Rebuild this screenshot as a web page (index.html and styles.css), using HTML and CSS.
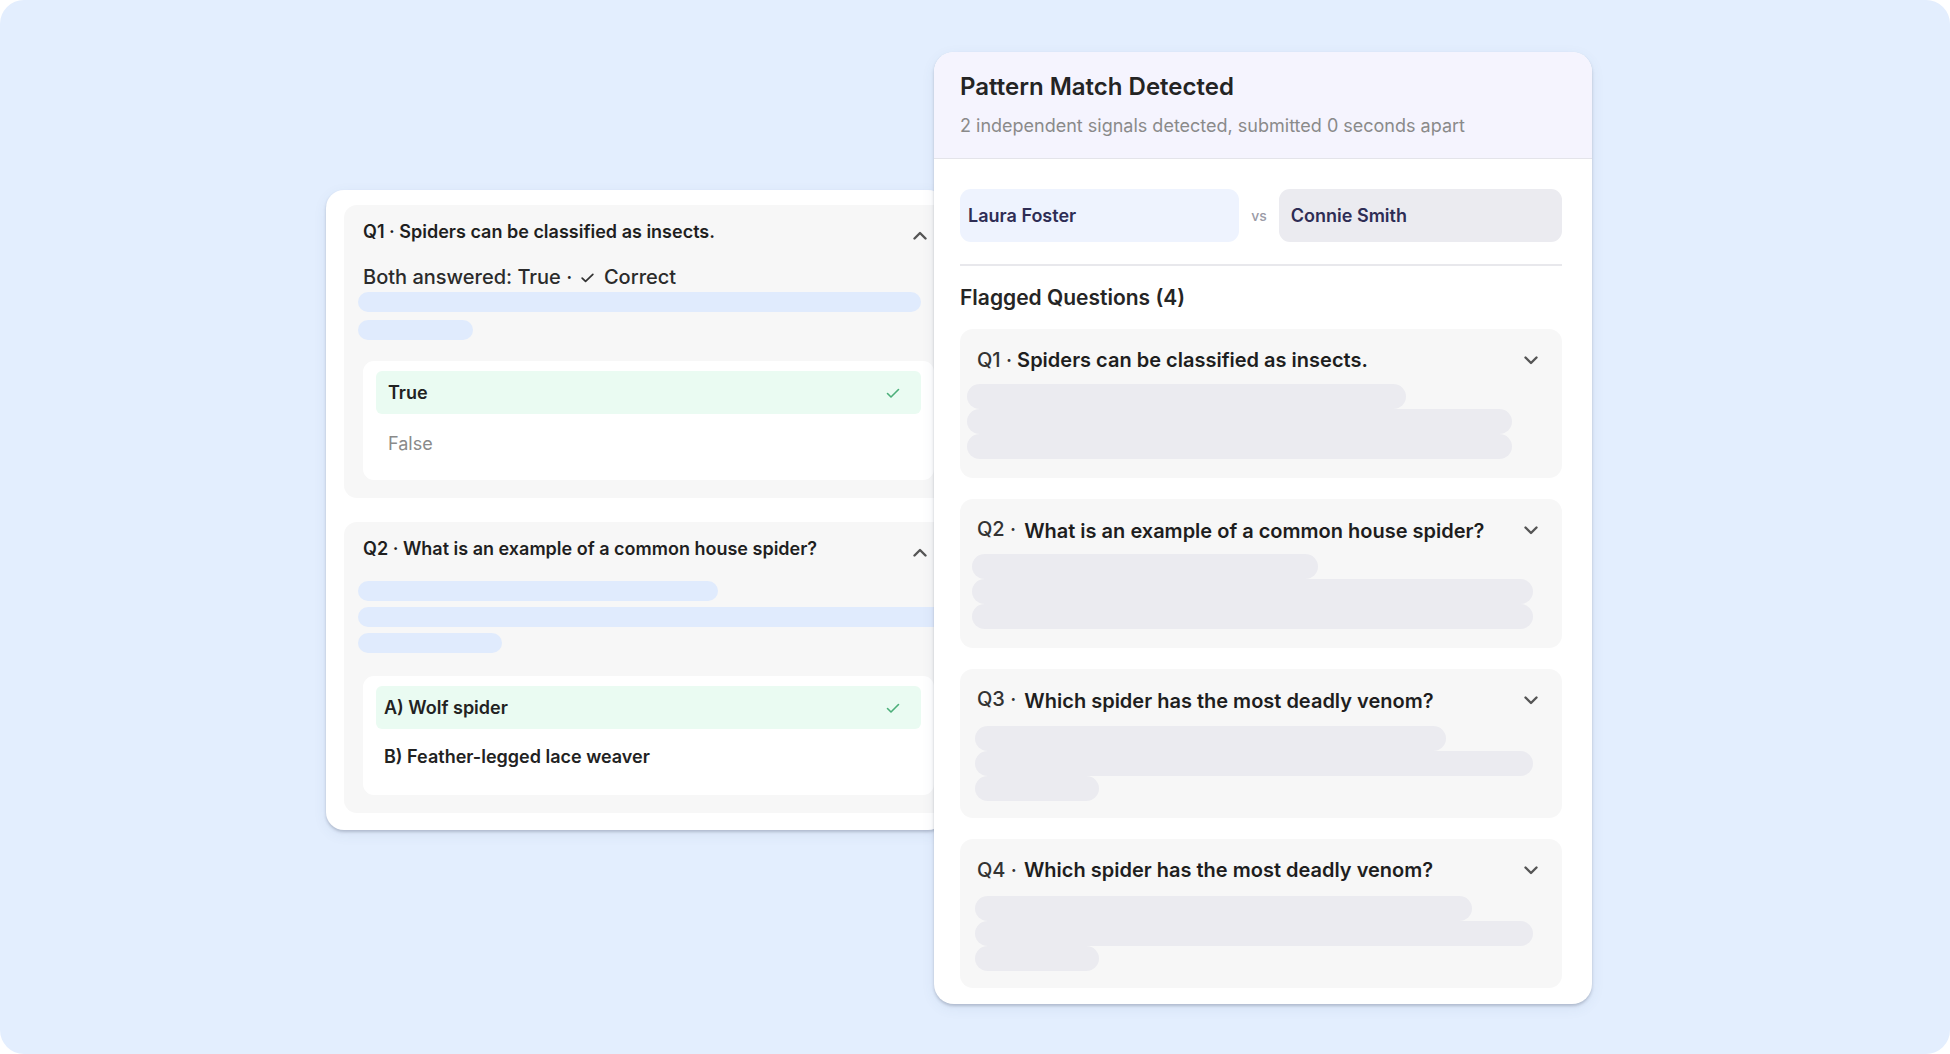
FILE: index.html
```html
<!DOCTYPE html>
<html lang="en">
<head>
    <meta charset="UTF-8">
    <meta name="viewport" content="width=device-width, initial-scale=1.0">
    <title>Pattern Match Detected</title>
    <link rel="stylesheet" href="styles.css">
</head>
<body>
    <div class="page">
        <div class="stage">
            <section class="card answers-card">
                <div class="answer-block">
                    <div class="block-head">
                        <span class="block-title">Q1 · Spiders can be classified as insects.</span>
                        <svg class="chevron up" viewBox="0 0 14 9"><path d="M1.5 7.5 7 2l5.5 5.5"/></svg>
                    </div>
                    <div class="verdict">Both answered: True · <svg class="tick" viewBox="0 0 14 14"><path d="M2 7.5l3.2 3.2L12 4"/></svg> Correct</div>
                    <div class="bars blue q1-left">
                        <span class="bar" style="width: 563px"></span>
                        <span class="bar" style="width: 115px"></span>
                    </div>
                    <ul class="options">
                        <li class="option selected"><span>True</span><svg class="check" viewBox="0 0 16 16"><path d="M2.5 8.5l3.5 3.5 7.5-7.5"/></svg></li>
                        <li class="option muted"><span>False</span></li>
                    </ul>
                </div>

                <div class="answer-block">
                    <div class="block-head">
                        <span class="block-title">Q2 · What is an example of a common house spider?</span>
                        <svg class="chevron up" viewBox="0 0 14 9"><path d="M1.5 7.5 7 2l5.5 5.5"/></svg>
                    </div>
                    <div class="bars blue q2-left">
                        <span class="bar" style="width: 360px"></span>
                        <span class="bar" style="width: 640px"></span>
                        <span class="bar" style="width: 144px"></span>
                    </div>
                    <ul class="options tight">
                        <li class="option selected"><span>A) Wolf spider</span><svg class="check" viewBox="0 0 16 16"><path d="M2.5 8.5l3.5 3.5 7.5-7.5"/></svg></li>
                        <li class="option"><span>B) Feather-legged lace weaver</span></li>
                    </ul>
                </div>
            </section>

            <section class="card match-card">
                <header class="match-header">
                    <h1>Pattern Match Detected</h1>
                    <p>2 independent signals detected, submitted 0 seconds apart</p>
                </header>

                <div class="match-body">
                    <div class="names">
                        <div class="name first">Laura Foster</div>
                        <span class="vs">vs</span>
                        <div class="name second">Connie Smith</div>
                    </div>
                    <hr class="divider">

                    <h2 class="flag-title">Flagged Questions (4)</h2>

                    <div class="flag-list">
                        <div class="flag-card">
                            <div class="flag-head">
                                <span class="flag-title-text"><span class="q-num">Q1 ·</span> Spiders can be classified as insects.</span>
                                <svg class="chevron" viewBox="0 0 14 9"><path d="M1.5 1.5 7 7l5.5-5.5"/></svg>
                            </div>
                            <div class="bars grey inset-a">
                                <span class="bar" style="width: 439px"></span>
                                <span class="bar" style="width: 545px"></span>
                                <span class="bar" style="width: 545px"></span>
                            </div>
                        </div>

                        <div class="flag-card">
                            <div class="flag-head">
                                <span class="flag-title-text"><span class="q-num raised">Q2 ·</span> What is an example of a common house spider?</span>
                                <svg class="chevron" viewBox="0 0 14 9"><path d="M1.5 1.5 7 7l5.5-5.5"/></svg>
                            </div>
                            <div class="bars grey inset-b">
                                <span class="bar" style="width: 346px"></span>
                                <span class="bar" style="width: 561px"></span>
                                <span class="bar" style="width: 561px"></span>
                            </div>
                        </div>

                        <div class="flag-card">
                            <div class="flag-head">
                                <span class="flag-title-text"><span class="q-num raised">Q3 ·</span> Which spider has the most deadly venom?</span>
                                <svg class="chevron" viewBox="0 0 14 9"><path d="M1.5 1.5 7 7l5.5-5.5"/></svg>
                            </div>
                            <div class="bars grey inset-c">
                                <span class="bar" style="width: 471px"></span>
                                <span class="bar" style="width: 558px"></span>
                                <span class="bar" style="width: 124px"></span>
                            </div>
                        </div>

                        <div class="flag-card">
                            <div class="flag-head">
                                <span class="flag-title-text"><span class="q-num spaced">Q4 ·</span> Which spider has the most deadly venom?</span>
                                <svg class="chevron" viewBox="0 0 14 9"><path d="M1.5 1.5 7 7l5.5-5.5"/></svg>
                            </div>
                            <div class="bars grey inset-c">
                                <span class="bar" style="width: 497px"></span>
                                <span class="bar" style="width: 558px"></span>
                                <span class="bar" style="width: 124px"></span>
                            </div>
                        </div>
                    </div>
                </div>
            </section>
        </div>
    </div>
</body>
</html>
```

FILE: styles.css
```css
:root {
    --page-bg: #e3eefe;
    --card-bg: #ffffff;
    --block-bg: #f7f7f7;
    --header-bg: #f5f4fe;
    --text: #1f1f1f;
    --muted: #8a8a8a;
    --navy: #2e2d55;
    --green: #4caf7a;
    --green-bg: #eafbf2;
    --blue-bar: #e0ebfd;
    --grey-bar: #ebebf0;
    --shadow: 0 2px 3px rgba(70, 80, 100, 0.28), 0 4px 14px rgba(70, 90, 130, 0.08);
}

* {
    box-sizing: border-box;
}

body {
    margin: 0;
    background: #ffffff;
    font-family: 'Inter', 'Noto Sans', sans-serif;
    color: var(--text);
}

.page {
    height: 1054px;
    background: var(--page-bg);
    border-radius: 24px;
    overflow: hidden;
}

.stage {
    display: flex;
    align-items: flex-start;
    padding: 52px 0 0 326px;
}

.card {
    background: var(--card-bg);
    box-shadow: var(--shadow);
}

/* left card: answers */
.answers-card {
    width: 620px;
    margin-top: 138px;
    padding: 15px 0 17px 18px;
    border-radius: 18px;
    display: flex;
    flex-direction: column;
    gap: 24px;
}

.answer-block {
    background: var(--block-bg);
    border-radius: 13px 0 0 13px;
    padding: 16px 12px 18px 19px;
}

.block-head {
    display: flex;
    justify-content: space-between;
    align-items: center;
    height: 22px;
}

.block-title {
    font-size: 18px;
    font-weight: 600;
    line-height: 22px;
}

.chevron {
    width: 14px;
    height: 9px;
    fill: none;
    stroke: #555;
    stroke-width: 2.4;
    stroke-linecap: round;
    stroke-linejoin: round;
}

.chevron.up {
    margin-right: 7px;
    margin-top: 7px;
}

.verdict {
    margin-top: 21px;
    font-size: 20px;
    font-weight: 500;
    line-height: 26px;
    color: #2b2b2b;
    display: flex;
    align-items: center;
    white-space: pre;
}

.tick {
    width: 15px;
    height: 15px;
    margin: 0 4px 0 2px;
    fill: none;
    stroke: #333;
    stroke-width: 1.6;
    stroke-linecap: round;
    stroke-linejoin: round;
}

.bars {
    display: flex;
    flex-direction: column;
    align-items: flex-start;
}

.bar {
    display: block;
    border-radius: 14px;
}

.bars.blue .bar {
    background: var(--blue-bar);
    height: 20px;
}

.q1-left {
    margin: 2px 0 0 -5px;
    gap: 8px;
}

.q2-left {
    margin: 21px 0 0 -5px;
    gap: 6px;
}

.options {
    list-style: none;
    margin: 21px 0 0;
    padding: 10px 13px 15px;
    background: #ffffff;
    border-radius: 11px;
    display: flex;
    flex-direction: column;
    gap: 8px;
}

.options.tight {
    margin-top: 23px;
    gap: 6px;
    padding-bottom: 17px;
}

.option {
    height: 43px;
    padding: 0 20px 0 8px;
    border-radius: 6px;
    display: flex;
    align-items: center;
    justify-content: space-between;
    font-size: 18px;
    font-weight: 600;
    color: #222;
}

.option.selected {
    background: var(--green-bg);
}

.answer-block:first-child .option {
    padding-left: 12px;
}

.option.muted {
    font-weight: 400;
    color: var(--muted);
}

.check {
    width: 16px;
    height: 16px;
    fill: none;
    stroke: var(--green);
    stroke-width: 1.6;
    stroke-linecap: round;
    stroke-linejoin: round;
}

/* right card: match */
.match-card {
    position: relative;
    z-index: 1;
    width: 658px;
    margin-left: -12px;
    border-radius: 20px;
    overflow: hidden;
}

.match-header {
    background: var(--header-bg);
    border-bottom: 1px solid #e4e4ea;
    padding: 20px 26px 20px;
}

.match-header h1 {
    margin: 0;
    font-size: 24px;
    font-weight: 600;
    line-height: 30px;
    color: #242424;
}

.match-header p {
    margin: 12px 0 0;
    font-size: 18px;
    line-height: 24px;
    color: var(--muted);
}

.match-body {
    padding: 30px 30px 16px 26px;
}

.names {
    display: flex;
    align-items: center;
    gap: 12px;
}

.name {
    flex: 1;
    height: 53px;
    border-radius: 11px;
    display: flex;
    align-items: center;
    font-size: 18px;
    font-weight: 600;
    color: var(--navy);
}

.name.first {
    background: #eef3fe;
    padding-left: 8px;
}

.name.second {
    background: #ebebf0;
    padding-left: 12px;
}

.vs {
    font-size: 14px;
    font-weight: 500;
    color: #9a9aa6;
}

.divider {
    margin: 22px 0 0;
    border: none;
    height: 2px;
    background: #e8e8ec;
}

.flag-title {
    margin: 19px 0 0;
    font-size: 21px;
    font-weight: 600;
    line-height: 26px;
    color: #252525;
}

.flag-list {
    margin-top: 18px;
    display: flex;
    flex-direction: column;
    gap: 21px;
}

.flag-card {
    height: 149px;
    background: var(--block-bg);
    border-radius: 13px;
    padding: 19px 24px 0 17px;
}

.flag-head {
    display: flex;
    justify-content: space-between;
    align-items: center;
    height: 24px;
}

.flag-title-text {
    font-size: 20px;
    font-weight: 600;
    line-height: 24px;
    color: #1e1e1e;
}

.q-num {
    font-weight: 500;
    color: #333;
}

.q-num.raised {
    vertical-align: 2px;
    margin-right: 3px;
}

.q-num.spaced {
    margin-right: 2px;
}

.bars.grey .bar {
    background: var(--grey-bar);
    height: 25px;
    border-radius: 13px;
}

.inset-a {
    margin: 12px 0 0 -10px;
}

.inset-b {
    margin: 12px 0 0 -5px;
}

.inset-c {
    margin: 14px 0 0 -2px;
}
```
